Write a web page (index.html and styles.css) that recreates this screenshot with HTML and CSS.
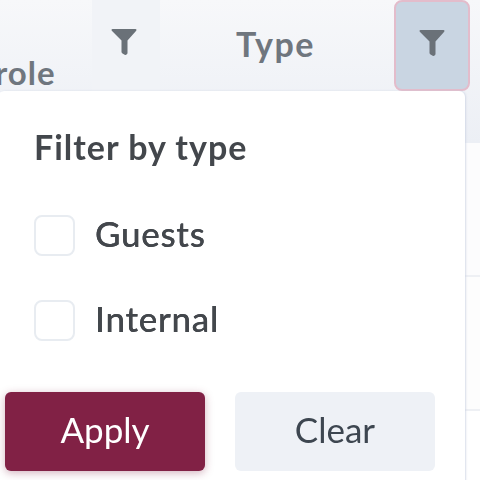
FILE: index.html
```html
<!DOCTYPE html>
<html lang="en">
<head>
<meta charset="utf-8">
<title>Filter by type</title>
<link rel="stylesheet" href="styles.css">
</head>
<body>
<div class="table">
  <div class="head">
    <span class="col-role">role</span>
    <button class="filter-btn role-btn" aria-label="Filter by role">
      <svg class="funnel" viewBox="0 0 26 28"><path d="M1.5 1h23a1 1 0 0 1 .7 1.700L16.500 12.500V25a2.400 2.400 0 0 1-1 1.600 1.600 1.600 0 0 1-1.400.4l-2.600-1.600a1.600 1.600 0 0 1-1-1.400V12.500L.8 2.700A1 1 0 0 1 1.500 1z"/></svg>
    </button>
    <span class="col-type">Type</span>
    <button class="filter-btn type-btn" aria-label="Filter by type">
      <svg class="funnel" viewBox="0 0 26 28"><path d="M1.5 1h23a1 1 0 0 1 .7 1.700L16.500 12.500V25a2.400 2.400 0 0 1-1 1.600 1.600 1.600 0 0 1-1.400.4l-2.600-1.600a1.600 1.600 0 0 1-1-1.400V12.500L.8 2.700A1 1 0 0 1 1.500 1z"/></svg>
    </button>
  </div>
  <div class="row row-first"></div>
  <div class="row"></div>

  <div class="popover">
    <h2 class="title">Filter by type</h2>
    <label class="option"><span class="box"></span><span class="option-text">Guests</span></label>
    <label class="option"><span class="box"></span><span class="option-text">Internal</span></label>
    <div class="actions">
      <button class="btn btn-apply">Apply</button>
      <button class="btn btn-clear">Clear</button>
    </div>
  </div>
</div>
</body>
</html>
```
FILE: styles.css
```css
* { box-sizing: border-box; }
html, body {
  margin: 0;
  width: 480px;
  height: 480px;
  overflow: hidden;
  background: #fff;
}
body { font-family: Lato, "Noto Sans", sans-serif; }
.table {
  position: relative;
  width: 480px;
  height: 480px;
  overflow: hidden;
  filter: blur(0.7px);
}
.head {
  height: 143px;
  background: linear-gradient(180deg, #f7f8fa 0%, #eceff5 100%);
  display: flex;
  align-items: flex-start;
  position: relative;
}
.col-role {
  font-size: 33px;
  line-height: 40px;
  font-weight: 700;
  letter-spacing: 1px;
  color: #6f767e;
  margin-left: -5px;
  margin-top: 52px;
  width: 97px;
}
.col-type {
  font-size: 34px;
  line-height: 40px;
  font-weight: 700;
  letter-spacing: 1.5px;
  color: #6f767e;
  margin-top: 24px;
  margin-left: 76px;
  width: 158px;
}
.filter-btn {
  border: 0;
  padding: 28px 0 0;
  background: #f1f3f7;
  height: 91px;
  width: 68px;
  display: flex;
  justify-content: center;
  align-items: flex-start;
}
.role-btn { padding-right: 4px; }
.type-btn {
  width: 76px;
  background: #c9d5e2;
  border: 2px solid #e3bccb;
  border-radius: 8px;
  padding-top: 27px;
  padding-right: 0;
}
.funnel { width: 26px; height: 28px; fill: #6a7178; display: block; }
.row {
  height: 134px;
  background: #fdfdfd;
  border-bottom: 2px solid #eef0f4;
  margin-left: 465px;
}
.row-first { background: #fcfcfd; }
.popover {
  position: absolute;
  left: -2px;
  top: 91px;
  width: 467px;
  height: 400px;
  background: #fff;
  border-radius: 6px;
  box-shadow: 1px 0 2px rgba(200, 208, 225, .7);
  padding: 36px 0 0 36px;
}
.title {
  margin: 0 0 48px;
  font-size: 34px;
  line-height: 40px;
  font-weight: 700;
  letter-spacing: 1px;
  color: #43474c;
}
.option {
  display: flex;
  align-items: center;
  gap: 20px;
  height: 40px;
  margin-bottom: 45px;
  font-size: 35px;
  font-weight: 500;
  letter-spacing: .7px;
  color: #43474c;
}
.option-text { margin-top: -4px; text-shadow: 0 0 .6px #43474c; }
.box {
  width: 41px;
  height: 41px;
  flex: none;
  border: 2px solid #e8ecf1;
  border-radius: 8px;
  background: #fff;
}
.actions {
  display: flex;
  gap: 30px;
  margin: 52px 0 0 -29px;
}
.option + .option { margin-bottom: 0; }
.btn {
  width: 200px;
  height: 79px;
  border: 0;
  border-radius: 6px;
  padding: 0 0 5px;
  font-family: Lato, "Noto Sans", sans-serif;
  font-size: 35px;
}
.btn-apply {
  background: #812145;
  color: #fff;
  box-shadow: 0 2px 8px rgba(129, 33, 69, .35);
}
.btn-clear {
  background: #eef1f6;
  color: #3d4650;
}
```
